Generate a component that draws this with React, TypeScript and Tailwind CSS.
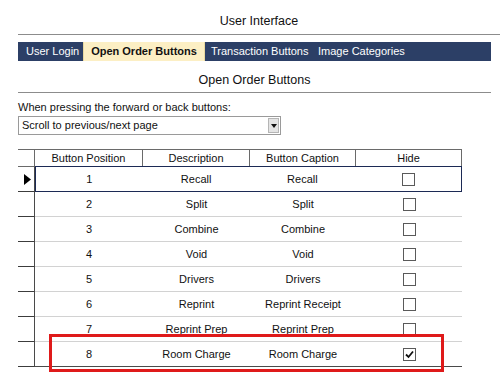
import React from "react";

const rows = [
  { pos: "1", desc: "Recall", cap: "Recall", hide: false },
  { pos: "2", desc: "Split", cap: "Split", hide: false },
  { pos: "3", desc: "Combine", cap: "Combine", hide: false },
  { pos: "4", desc: "Void", cap: "Void", hide: false },
  { pos: "5", desc: "Drivers", cap: "Drivers", hide: false },
  { pos: "6", desc: "Reprint", cap: "Reprint Receipt", hide: false },
  { pos: "7", desc: "Reprint Prep", cap: "Reprint Prep", hide: false },
  { pos: "8", desc: "Room Charge", cap: "Room Charge", hide: true },
];

function Checkbox({ checked }: { checked: boolean }) {
  return (
    <div className="w-[13px] h-[13px] border border-[#5a5a5a] bg-white flex items-center justify-center">
      {checked && (
        <svg width="9" height="9" viewBox="0 0 9 9">
          <path d="M1 4.5 L3.5 7 L8 1.5" fill="none" stroke="#111" strokeWidth="1.8" />
        </svg>
      )}
    </div>
  );
}

export default function App() {
  return (
    <div
      className="w-[500px] h-[381px] bg-white relative overflow-hidden text-[#111] text-[11px]"
      style={{ fontFamily: '"Liberation Sans", Arial, sans-serif' }}
    >
      <div className="ml-[18px] pt-[14px]">
        <div className="h-[21px] border-b border-[#8c8c8c] text-center text-[12.5px] leading-[15px]">
          User Interface
        </div>
      </div>
      <div className="ml-[18px] w-[473px] mt-[7px] h-[19px] bg-[#2c3f66] flex items-stretch text-white leading-[19px]">
        <div className="w-[65px] pl-[8px] whitespace-nowrap">User Login</div>
        <div className="bg-[#fcefc4] text-[#111] font-bold w-[122px] text-center whitespace-nowrap border-l border-r border-[#e9d9a0]">
          Open Order Buttons
        </div>
        <div className="w-[113px] pl-[6px] whitespace-nowrap">Transaction Buttons</div>
        <div className="whitespace-nowrap">Image Categories</div>
      </div>
      <div className="ml-[18px] w-[473px] h-[32px] pt-[12px] border-b border-[#8c8c8c] text-center text-[12.5px] leading-[15px]">
        Open Order Buttons
      </div>
      <div className="ml-[18px] mt-[8px] leading-[12px]">When pressing the forward or back buttons:</div>
      <div className="ml-[18px] mt-[3px] w-[263px] h-[19px] border border-[#9a9a9a] flex items-center justify-between">
        <span className="pl-[3px] leading-[17px]">Scroll to previous/next page</span>
        <div className="w-[11px] h-[15px] mr-[1px] bg-[#e4e4e4] border border-[#b5b5b5] flex items-center justify-center">
          <svg width="6" height="4" viewBox="0 0 6 4">
            <path d="M0 0 H6 L3 4 Z" fill="#111" />
          </svg>
        </div>
      </div>

      <div className="ml-[18px] mt-[14px] w-[444px]">
        <div className="flex h-[18px] border-t border-b border-[#6a6a6a] leading-[16px] text-center">
          <div className="w-[17px] border-r border-[#6a6a6a]" />
          <div className="w-[108px] border-r border-[#6a6a6a]">Button Position</div>
          <div className="w-[107px] border-r border-[#6a6a6a]">Description</div>
          <div className="w-[106px] border-r border-[#6a6a6a]">Button Caption</div>
          <div className="w-[106px] border-r border-[#6a6a6a]">Hide</div>
        </div>
        {rows.map((r, i) => {
          const last = i === rows.length - 1;
          const sel = i === 0;
          return (
            <div key={r.pos} className={`flex ${sel ? "-mt-[1px] h-[26px]" : "h-[25px]"}`}>
              <div
                className={`w-[17px] border-r border-[#4a4a4a] flex items-center pl-[6px] border-b border-b-[#3c3c3c] ${
                  sel ? "border-t border-t-[#6a6a6a]" : ""
                }`}
              >
                {sel && (
                  <svg width="7" height="11" viewBox="0 0 7 11">
                    <path d="M0 0 L7 5.5 L0 11 Z" fill="#000" />
                  </svg>
                )}
              </div>
              <div
                className={`flex w-[427px] text-center items-center ${
                  sel
                    ? "border border-[#1c2a55]"
                    : last
                    ? "border-b border-[#4a4a4a]"
                    : "border-b border-[#d2d2d2]"
                }`}
              >
                <div className={sel ? "w-[107px]" : "w-[108px]"}>{r.pos}</div>
                <div className="w-[107px]">{r.desc}</div>
                <div className="w-[106px]">{r.cap}</div>
                <div className="w-[106px] flex justify-center">
                  <Checkbox checked={r.hide} />
                </div>
              </div>
            </div>
          );
        })}
      </div>

      <div className="absolute left-[49px] top-[334px] w-[395px] h-[38px] border-[3px] border-[#df1a1a]" />
    </div>
  );
}
